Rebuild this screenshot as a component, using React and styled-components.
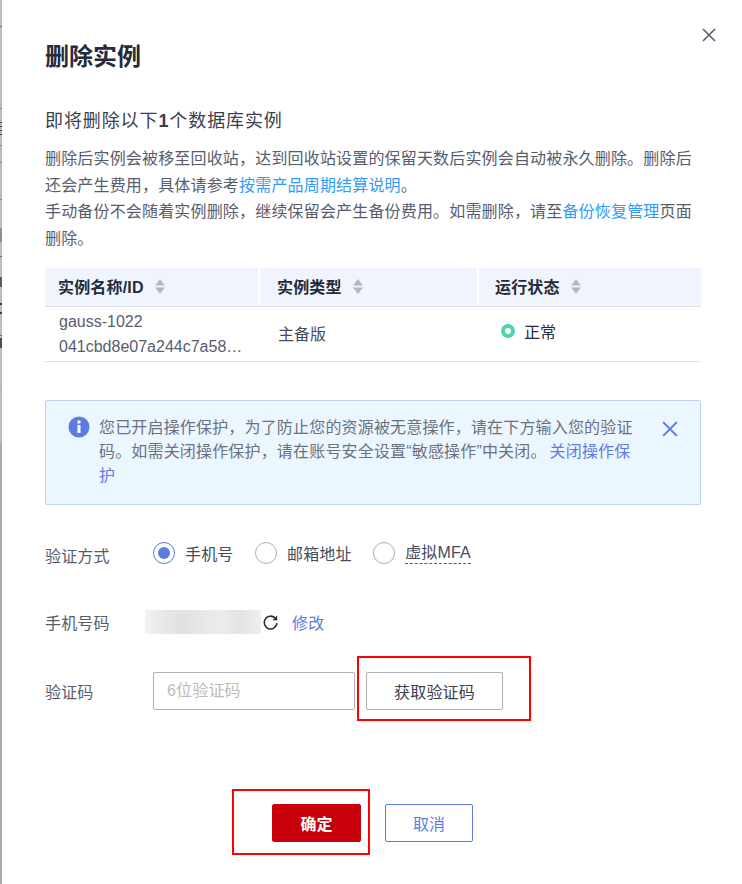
import React from 'react';
import styled, { createGlobalStyle } from 'styled-components';

const FONT = `"Liberation Sans", "Noto Sans CJK SC", sans-serif`;
const SPACING = '0.17px';

const Global = createGlobalStyle`
  html, body { margin: 0; padding: 0; background: #fff; }
  body { font-family: ${FONT}; }
`;

const Page = styled.div`
  position: relative;
  display: flex;
  width: 742px;
  height: 884px;
  overflow: hidden;
  background: #fff;
`;

// the dimmed page that peeks out on the left of the dialog
const stripe = (color, from, to) => `linear-gradient(${color}, ${color}) 0 ${from}px / 100% ${to - from}px no-repeat`;

const Backdrop = styled.div`
  flex: 0 0 2px;
  background:
    ${stripe('#4a6fc0', 26, 27)},
    ${stripe('#8d8d90', 108, 109)},
    ${stripe('#3d3d40', 122, 123)},
    ${stripe('#3d3d40', 126, 127)},
    ${stripe('#3d3d40', 130, 131)},
    ${stripe('#3d3d40', 134, 135)},
    ${stripe('#8d8d90', 145, 146)},
    ${stripe('#8d8d90', 162, 163)},
    ${stripe('#8d8d90', 199, 200)},
    ${stripe('#8d9094', 228, 242)},
    ${stripe('#4a6fc0', 256, 257)},
    ${stripe('#5a5a62', 277, 287)},
    ${stripe('#4a3a30', 303, 305)},
    ${stripe('#4a3a30', 312, 314)},
    ${stripe('#4a6fc0', 335, 336)},
    ${stripe('#4b4d5a', 338, 348)},
    ${stripe('#b9ac98', 390, 391)},
    linear-gradient(#bcbcbc 0, #bcbcbc 442px, #abadb3 442px);
`;

const Dialog = styled.div`
  flex: 1;
  padding: 40px 41px 0 43px;
  color: #252b3a;
`;

const CloseButton = styled.button`
  position: absolute;
  top: 28px;
  right: 26px;
  width: 14px;
  height: 14px;
  padding: 0;
  border: 0;
  background: none;
  display: flex;
`;

const Title = styled.h2`
  margin: 0;
  font-size: 24px;
  line-height: 34px;
  font-weight: 700;
  color: #252b3a;
`;

const Subtitle = styled.h3`
  margin: 34px 0 0;
  font-size: 18px;
  letter-spacing: 0.9px;
  line-height: 26px;
  font-weight: 400;
  color: #3a404e;
  b { font-weight: 700; }
`;

const Desc = styled.p`
  margin: 12px 0 0;
  font-size: 16px;
  letter-spacing: ${SPACING};
  line-height: 26.5px;
  color: #575d6c;
`;

const Link = styled.a`
  color: ${p => (p.$dark ? '#5e7ce0' : '#2e9bfa')};
`;

const Table = styled.div`
  margin-top: 16px;
  width: 656px;
`;

const HeadRow = styled.div`
  display: grid;
  grid-template-columns: 213px 219px 224px;
  height: 39px;
  background: #f0f4fc;
  border-bottom: 1px solid #dfe1e6;
  box-sizing: border-box;
`;

const HeadCell = styled.div`
  display: flex;
  align-items: center;
  gap: 10px;
  padding-left: ${p => p.$pad}px;
  font-size: 16px;
  letter-spacing: ${SPACING};
  font-weight: 700;
  color: #252b3a;
  border-left: ${p => (p.$first ? 0 : '2px solid #fff')};
  height: 36px;
`;

const BodyRow = styled.div`
  display: grid;
  grid-template-columns: 213px 219px 224px;
  height: 55px;
  border-bottom: 1px solid #dfe1e6;
  box-sizing: border-box;
  font-size: 16px;
  color: #252b3a;
`;

const NameCell = styled.div`
  padding: 3px 0 0 14px;
  line-height: 24.5px;
  color: #575d6c;
`;

const TypeCell = styled.div`
  padding-left: 20px;
  line-height: 56px;
  color: #464c5a;
`;

const StatusCell = styled.div`
  display: flex;
  align-items: center;
  gap: 9px;
  padding: 0 0 9px 24px;
`;

const StatusDot = styled.span`
  width: 14px;
  height: 14px;
  box-sizing: border-box;
  border: 4px solid #50d4ab;
  border-radius: 50%;
`;

const Alert = styled.div`
  position: relative;
  display: flex;
  gap: 9px;
  box-sizing: border-box;
  width: 656px;
  height: 105px;
  margin-top: 38px;
  padding: 15px 0 0 22px;
  border: 1px solid #bed1f9;
  border-radius: 2px;
  background: #ebf6ff;
`;

const AlertText = styled.div`
  width: 537px;
  font-size: 16px;
  letter-spacing: ${SPACING};
  line-height: 24px;
  color: #6b717f;
`;

const AlertLink = styled(Link)`
  margin-left: 3px;
`;

const AlertClose = styled.button`
  position: absolute;
  top: 20px;
  right: 22px;
  width: 16px;
  height: 16px;
  padding: 0;
  border: 0;
  background: none;
  display: flex;
`;

const FormRow = styled.div`
  display: flex;
  align-items: center;
  height: ${p => p.$h}px;
  margin-top: ${p => p.$top}px;
  letter-spacing: ${SPACING};
`;

const Label = styled.div`
  flex: 0 0 ${p => p.$w || 108}px;
  font-size: 16px;
  color: #575d6c;
`;

const RadioGroup = styled.div`
  display: flex;
  align-items: center;
  gap: 21.5px;
  padding-bottom: 4px;
`;

const RadioItem = styled.label`
  display: flex;
  align-items: center;
  gap: 10px;
  font-size: 16px;
  color: #464c5a;
`;

const RadioMark = styled.span`
  display: flex;
  align-items: center;
  justify-content: center;
  width: 22px;
  height: 22px;
  box-sizing: border-box;
  border-radius: 50%;
  border: 1px solid ${p => (p.$on ? '#5e7ce0' : '#adb0b8')};
  &::after {
    content: '';
    display: ${p => (p.$on ? 'block' : 'none')};
    width: 12px;
    height: 12px;
    border-radius: 50%;
    background: #5e7ce0;
  }
`;

const Dashed = styled.span`
  border-bottom: 1px dashed #575d6c;
  line-height: 20px;
`;

const BlurredPhone = styled.div`
  width: 116px;
  height: 24px;
  background: linear-gradient(90deg, #f3f3f4 0%, #e6e6e8 20%, #dfe0e2 32%, #e6e7e9 50%, #ebecee 66%, #e2e3e5 80%, #eeeeef 100%);
`;

const RefreshIcon = styled.svg`
  margin-left: 1px;
  width: 17px;
  height: 17px;
  display: block;
`;

const EditLink = styled(Link)`
  margin-left: 13px;
  font-size: 16px;
`;

const CodeInput = styled.input`
  width: 202px;
  height: 38px;
  box-sizing: border-box;
  padding: 0 13px;
  border: 1px solid #adb0b8;
  border-radius: 2px;
  font: 16px ${FONT};
  letter-spacing: ${SPACING};
  outline: none;
  &::placeholder { color: #bbbbbb; opacity: 1; }
`;

const CodeButton = styled.button`
  width: 137px;
  height: 38px;
  margin-left: 11px;
  padding: 0;
  background: #fff;
  border: 1px solid #adb0b8;
  border-radius: 2px;
  font: 16px ${FONT};
  letter-spacing: ${SPACING};
  color: #3a404e;
`;

const Footer = styled.div`
  display: flex;
  gap: 24px;
  margin: 94px 0 0 227px;
`;

const Button = styled.button`
  height: 38px;
  padding: 0;
  width: ${p => (p.$primary ? 89 : 88)}px;
  border-radius: 2px;
  font: ${p => (p.$primary ? 700 : 400)} 16px ${FONT};
  color: ${p => (p.$primary ? '#fff' : '#5e7ce0')};
  background: ${p => (p.$primary ? '#c7000b' : '#fff')};
  border: 1px solid ${p => (p.$primary ? '#c7000b' : '#5e7ce0')};
`;

const Annotation = styled.div`
  position: absolute;
  left: ${p => p.$x}px;
  top: ${p => p.$y}px;
  width: ${p => p.$w}px;
  height: ${p => p.$h}px;
  box-sizing: border-box;
  border: 2px solid #ff0000;
  pointer-events: none;
`;

const Cross = ({ color, width }) => (
  <svg viewBox="0 0 14 14" width="100%" height="100%">
    <path d="M1 1 L13 13 M13 1 L1 13" stroke={color} strokeWidth={width} fill="none" />
  </svg>
);

const Sort = () => (
  <svg width="10" height="15" viewBox="0 0 10 15" style={{ marginLeft: 1 }}>
    <path d="M5 0 L10 6.5 H0 Z M5 15 L0 8.5 H10 Z" fill="#b4b6bd" />
  </svg>
);

const InfoIcon = () => (
  <svg width="22" height="22" viewBox="0 0 22 22" style={{ flex: 'none' }}>
    <circle cx="11" cy="11" r="10.5" fill="#5e7ce0" />
    <rect x="9.5" y="4.5" width="3" height="3" rx="0.6" fill="#fff" />
    <rect x="9.5" y="9" width="3" height="8" rx="0.6" fill="#fff" />
  </svg>
);

export default function App() {
  return (
    <Page>
      <Global />
      <Backdrop />
      <Dialog>
        <CloseButton>
          <Cross color="#575d6c" width="1.6" />
        </CloseButton>
        <Title>删除实例</Title>
        <Subtitle>即将删除以下<b>1</b>个数据库实例</Subtitle>
        <Desc>
          删除后实例会被移至回收站，达到回收站设置的保留天数后实例会自动被永久删除。删除后<br />
          还会产生费用，具体请参考<Link>按需产品周期结算说明</Link>。
          <br />
          手动备份不会随着实例删除，继续保留会产生备份费用。如需删除，请至<Link>备份恢复管理</Link>页面<br />
          删除。
        </Desc>
        <Table>
          <HeadRow>
            <HeadCell $first $pad={13}>实例名称/ID <Sort /></HeadCell>
            <HeadCell $pad={17}>实例类型 <Sort /></HeadCell>
            <HeadCell $pad={16}>运行状态 <Sort /></HeadCell>
          </HeadRow>
          <BodyRow>
            <NameCell>gauss-1022<br />041cbd8e07a244c7a58…</NameCell>
            <TypeCell>主备版</TypeCell>
            <StatusCell><StatusDot />正常</StatusCell>
          </BodyRow>
        </Table>
        <Alert>
          <InfoIcon />
          <AlertText>
            您已开启操作保护，为了防止您的资源被无意操作，请在下方输入您的验证码。如需关闭操作保护，请在账号安全设置“敏感操作”中关闭。<AlertLink $dark>关闭操作保护</AlertLink>
          </AlertText>
          <AlertClose>
            <Cross color="#5e7ce0" width="1.8" />
          </AlertClose>
        </Alert>
        <FormRow $h={38} $top={31}>
          <Label>验证方式</Label>
          <RadioGroup>
            <RadioItem><RadioMark $on />手机号</RadioItem>
            <RadioItem><RadioMark />邮箱地址</RadioItem>
            <RadioItem><RadioMark /><Dashed>虚拟MFA</Dashed></RadioItem>
          </RadioGroup>
        </FormRow>
        <FormRow $h={24} $top={36}>
          <Label $w={100}>手机号码</Label>
          <BlurredPhone />
          <RefreshIcon viewBox="0 0 17 17" fill="none">
            <path d="M15 9.2 A6.4 6.4 0 1 1 13 3.9" stroke="#252b3a" strokeWidth="1.6" />
            <path d="M15.2 1.4 V6.2 H10.4 Z" fill="#252b3a" />
          </RefreshIcon>
          <EditLink $dark>修改</EditLink>
        </FormRow>
        <FormRow $h={38} $top={38}>
          <Label>验证码</Label>
          <CodeInput placeholder="6位验证码" />
          <CodeButton>获取验证码</CodeButton>
        </FormRow>
        <Footer>
          <Button $primary>确定</Button>
          <Button>取消</Button>
        </Footer>
      </Dialog>
      <Annotation $x={357} $y={656} $w={174} $h={65} />
      <Annotation $x={232} $y={789} $w={138} $h={66} />
    </Page>
  );
}
